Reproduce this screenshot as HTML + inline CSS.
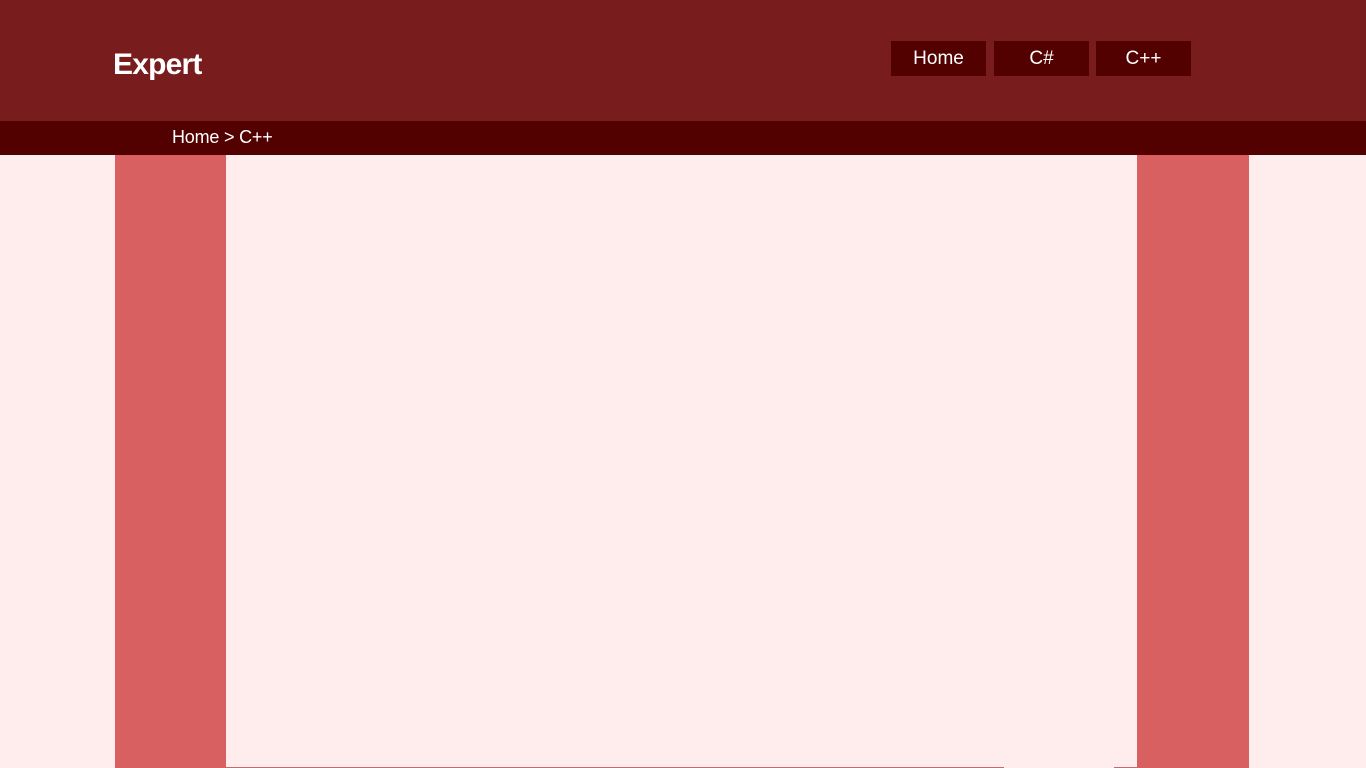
<!DOCTYPE html>
<html><head><style>
body{margin:0;width:1366px;height:768px;overflow:hidden;background:#ffeded;font-family:"Liberation Sans",sans-serif;position:relative}
.hdr{position:absolute;left:0;top:0;width:1366px;height:121px;background:#781c1e}
.logo{position:absolute;left:113px;top:48px;color:#fff;font-size:30px;font-weight:bold;letter-spacing:-0.8px}
.nav{position:absolute;top:41px;width:95px;height:35px;background:#520000;color:#fff;font-size:19px;text-align:center;line-height:36px}
.bc{position:absolute;left:0;top:121px;width:1366px;height:34px;background:#520000}
.bc span{position:absolute;left:172px;top:6px;color:#fff;font-size:18px;letter-spacing:-0.2px}
.col{position:absolute;top:155px;height:613px;background:#d86060}
</style></head><body>
<div class="hdr"><div class="logo">Expert</div>
<div class="nav" style="left:891px">Home</div>
<div class="nav" style="left:994px">C#</div>
<div class="nav" style="left:1096px">C++</div>
</div>
<div class="bc"><span>Home &gt; C++</span></div>
<div class="col" style="left:115px;width:111px"></div>
<div class="col" style="left:1137px;width:112px"></div>
<div style="position:absolute;left:226px;top:767px;width:778px;height:1px;background:#c86868"></div>
<div style="position:absolute;left:1114px;top:767px;width:23px;height:1px;background:#c86868"></div>
</body></html>
